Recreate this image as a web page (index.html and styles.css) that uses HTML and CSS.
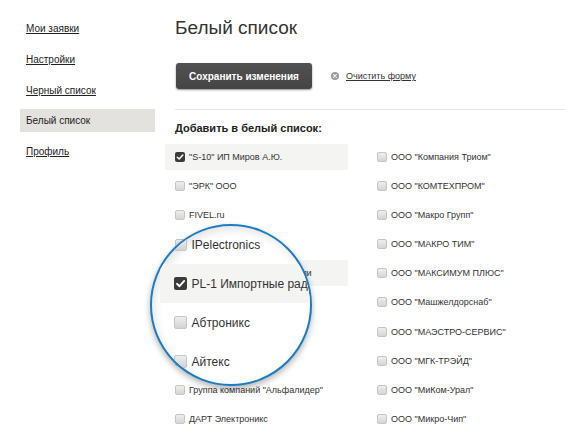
FILE: index.html
```html
<!DOCTYPE html>
<html lang="ru">
<head>
<meta charset="utf-8">
<title>Белый список</title>
<link rel="stylesheet" href="styles.css">
</head>
<body>
<div class="page">
  <nav class="sidebar">
    <a class="nav-link" href="#">Мои заявки</a>
    <a class="nav-link" href="#">Настройки</a>
    <a class="nav-link" href="#">Черный список</a>
    <span class="nav-link active">Белый список</span>
    <a class="nav-link" href="#">Профиль</a>
  </nav>

  <main class="content">
    <h1 class="title">Белый список</h1>
    <div class="actions">
      <button class="btn-save" type="button">Сохранить изменения</button>
      <a class="clear" href="#"><span class="clear-icon"><svg viewBox="0 0 8 8" width="8" height="8"><circle cx="4" cy="4" r="4" fill="#9a9a9a"/><path d="M2.6 2.6 L5.4 5.4 M5.4 2.6 L2.6 5.4" stroke="#fff" stroke-width="1.1" stroke-linecap="round"/></svg></span><span class="clear-text">Очистить форму</span></a>
    </div>
    <hr class="divider">
    <h2 class="section-title">Добавить в белый список:</h2>

    <div class="list">
      <label class="item selected"><span class="cb checked"><svg viewBox="0 0 10 10" width="10" height="10"><path d="M2.3 5.2 L4.2 7 L7.8 3" fill="none" stroke="#fff" stroke-width="1.5" stroke-linecap="round" stroke-linejoin="round"/></svg></span><span class="item-text">"S-10" ИП Миров А.Ю.</span></label>
      <label class="item"><span class="cb"></span><span class="item-text">"ЭРК" ООО</span></label>
      <label class="item"><span class="cb"></span><span class="item-text">FIVEL.ru</span></label>
      <label class="item"><span class="cb"></span><span class="item-text">IPelectronics</span></label>
      <label class="item selected"><span class="cb checked"><svg viewBox="0 0 10 10" width="10" height="10"><path d="M2.3 5.2 L4.2 7 L7.8 3" fill="none" stroke="#fff" stroke-width="1.5" stroke-linecap="round" stroke-linejoin="round"/></svg></span><span class="item-text narrow">PL-1 Импортные радиодетали</span></label>
      <label class="item"><span class="cb"></span><span class="item-text">Абтроникс</span></label>
      <label class="item"><span class="cb"></span><span class="item-text">Айтекс</span></label>
      <label class="item"><span class="cb"></span><span class="item-text">Аргус</span></label>
      <label class="item"><span class="cb"></span><span class="item-text">Группа компаний "Альфалидер"</span></label>
      <label class="item"><span class="cb"></span><span class="item-text">ДАРТ Электроникс</span></label>

      <label class="item"><span class="cb"></span><span class="item-text">ООО "Компания Триом"</span></label>
      <label class="item"><span class="cb"></span><span class="item-text">ООО "КОМТЕХПРОМ"</span></label>
      <label class="item"><span class="cb"></span><span class="item-text">ООО "Макро Групп"</span></label>
      <label class="item"><span class="cb"></span><span class="item-text">ООО "МАКРО ТИМ"</span></label>
      <label class="item"><span class="cb"></span><span class="item-text">ООО "МАКСИМУМ ПЛЮС"</span></label>
      <label class="item"><span class="cb"></span><span class="item-text">ООО "Машжелдорснаб"</span></label>
      <label class="item"><span class="cb"></span><span class="item-text">ООО "МАЭСТРО-СЕРВИС"</span></label>
      <label class="item"><span class="cb"></span><span class="item-text">ООО "МГК-ТРЭЙД"</span></label>
      <label class="item"><span class="cb"></span><span class="item-text">ООО "МиКом-Урал"</span></label>
      <label class="item"><span class="cb"></span><span class="item-text">ООО "Микро-Чип"</span></label>
    </div>
  </main>

  <div class="lens" aria-hidden="true">
    <div class="lens-row"><span class="lcb"></span><span class="lens-text">IPelectronics</span></div>
    <div class="lens-row selected"><span class="lcb checked"><svg viewBox="0 0 13 13" width="13" height="13"><path d="M3 6.8 L5.5 9.2 L10.2 3.9" fill="none" stroke="#fff" stroke-width="1.9" stroke-linecap="round" stroke-linejoin="round"/></svg></span><span class="lens-text">PL-1 Импортные радиодетали</span></div>
    <div class="lens-row"><span class="lcb"></span><span class="lens-text">Абтроникс</span></div>
    <div class="lens-row"><span class="lcb"></span><span class="lens-text">Айтекс</span></div>
  </div>
</div>
</body>
</html>
```

FILE: styles.css
```css
* { box-sizing: border-box; }

html, body {
  margin: 0;
  padding: 0;
  background: #fff;
}

body {
  font-family: "Liberation Sans", Arial, sans-serif;
  color: #222;
}

.page {
  position: relative;
  display: flex;
  width: 565px;
  height: 440px;
  overflow: hidden;
}

/* Sidebar */
.sidebar {
  width: 155px;
  flex: 0 0 155px;
  padding: 17px 0 0 20px;
  display: flex;
  flex-direction: column;
  gap: 7.75px;
}

.nav-link {
  display: block;
  height: 23px;
  line-height: 23px;
  padding-left: 6px;
  font-size: 10px;
  color: #222;
  text-decoration: underline;
  text-underline-offset: 1px;
}

.nav-link.active {
  background: #e3e2df;
  text-decoration: none;
}

/* Content */
.content {
  flex: 1;
  padding-left: 20px;
}

.title {
  margin: 17px 0 0;
  font-size: 19px;
  line-height: 22px;
  font-weight: normal;
  color: #333;
}

.actions {
  margin-top: 24px;
  display: flex;
  align-items: center;
  gap: 19px;
}

.btn-save {
  margin-left: 1px;
  width: 136px;
  height: 26px;
  border: 0;
  border-radius: 3px;
  background: linear-gradient(#525252, #444);
  box-shadow: 0 1px 2px rgba(0, 0, 0, 0.45);
  color: #fff;
  font-family: "Liberation Sans", Arial, sans-serif;
  font-size: 10px;
  font-weight: bold;
  padding: 0;
}

.clear {
  display: flex;
  align-items: center;
  gap: 7px;
  color: #333;
  font-size: 9px;
  text-decoration: none;
}

.clear-icon {
  display: flex;
  width: 8px;
  height: 8px;
}

.clear-text {
  text-decoration: underline;
  text-underline-offset: 1px;
}

.divider {
  margin: 20px 0 0;
  border: 0;
  border-top: 1px solid #e6e6e6;
  height: 0;
}

.section-title {
  margin: 11px 0 0;
  font-size: 11px;
  line-height: 14px;
  font-weight: bold;
  color: #222;
}

/* Checkbox list */
.list {
  margin: 9px 0 0 -10px;
  display: grid;
  grid-template-columns: 183px 183px;
  grid-template-rows: repeat(10, 26px);
  grid-auto-flow: column;
  column-gap: 19px;
  row-gap: 3.1px;
}

.item {
  display: flex;
  align-items: center;
  gap: 4px;
  padding-left: 10px;
  font-size: 9px;
  color: #333;
  white-space: nowrap;
}

.item-text.narrow {
  letter-spacing: -0.15px;
}

.item.selected {
  background: #f4f4f2;
}

.cb {
  display: flex;
  flex: 0 0 10px;
  width: 10px;
  height: 10px;
  border: 1px solid #c6c6c6;
  border-radius: 2px;
  background: linear-gradient(#eeeeee, #d5d5d5);
}

.cb.checked {
  border: 0;
  background: #3b3b3b;
}

/* Magnifier */
.lens {
  position: absolute;
  left: 150px;
  top: 224px;
  width: 162px;
  height: 162px;
  border: 2.5px solid #1b7cc1;
  border-radius: 50%;
  overflow: hidden;
  background: #fff;
  box-shadow: 0 3px 6px rgba(0, 0, 0, 0.3), inset 3px 4px 8px rgba(0, 0, 0, 0.1);
  display: flex;
  flex-direction: column;
}

.lens-row {
  flex: 0 0 39px;
  height: 39px;
  margin-left: 7.5px;
  padding-left: 14px;
  display: flex;
  align-items: center;
  gap: 5px;
  font-size: 12px;
  color: #333;
  white-space: nowrap;
}

.lens-row:first-child {
  margin-top: -1px;
}

.lens-row.selected {
  background: #f4f4f2;
}

.lcb {
  display: flex;
  flex: 0 0 13px;
  width: 13px;
  height: 13px;
  border: 1px solid #c6c6c6;
  border-radius: 2px;
  background: linear-gradient(#eeeeee, #d3d3d3);
}

.lcb.checked {
  border: 0;
  background: #3b3b3b;
}
```
